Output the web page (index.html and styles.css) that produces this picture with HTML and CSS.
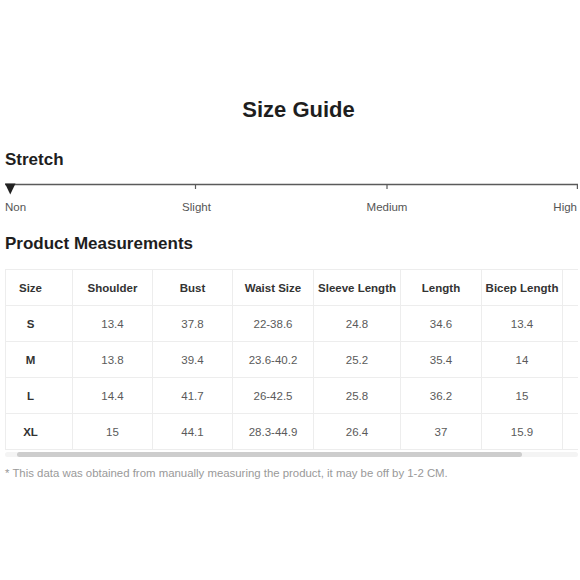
FILE: index.html
```html
<!DOCTYPE html>
<html>
<head>
<meta charset="utf-8">
<link rel="stylesheet" href="styles.css">
</head>
<body>
<div class="page">
  <h1 class="title">Size Guide</h1>
  <h2 class="section stretch-title">Stretch</h2>
  <svg class="slider" width="573" height="14" viewBox="0 0 573 14">
    <line x1="0" y1="1.5" x2="573" y2="1.5" stroke="#5a5a5a" stroke-width="1.6"/>
    <line x1="190.5" y1="1.5" x2="190.5" y2="6" stroke="#5a5a5a" stroke-width="1.2"/>
    <line x1="382" y1="1.5" x2="382" y2="6" stroke="#5a5a5a" stroke-width="1.2"/>
    <line x1="572.4" y1="1.5" x2="572.4" y2="6" stroke="#5a5a5a" stroke-width="1.2"/>
    <polygon points="0,0.5 10.5,0.5 5.25,11.5" fill="#222"/>
  </svg>
  <div class="labels">
    <span class="lbl l-non">Non</span>
    <span class="lbl l-slight">Slight</span>
    <span class="lbl l-medium">Medium</span>
    <span class="lbl l-high">High</span>
  </div>
  <h2 class="section pm-title">Product Measurements</h2>
  <div class="table-wrap">
    <table class="sizes">
      <colgroup>
        <col class="c-size"><col class="c-80"><col class="c-80"><col class="c-81"><col class="c-87"><col class="c-81"><col class="c-81"><col class="c-extra">
      </colgroup>
      <thead>
        <tr><th class="sz">Size</th><th>Shoulder</th><th>Bust</th><th>Waist Size</th><th>Sleeve Length</th><th>Length</th><th>Bicep Length</th><th></th></tr>
      </thead>
      <tbody>
        <tr><td class="sz">S</td><td>13.4</td><td>37.8</td><td>22-38.6</td><td>24.8</td><td>34.6</td><td>13.4</td><td></td></tr>
        <tr><td class="sz">M</td><td>13.8</td><td>39.4</td><td>23.6-40.2</td><td>25.2</td><td>35.4</td><td>14</td><td></td></tr>
        <tr><td class="sz">L</td><td>14.4</td><td>41.7</td><td>26-42.5</td><td>25.8</td><td>36.2</td><td>15</td><td></td></tr>
        <tr><td class="sz">XL</td><td>15</td><td>44.1</td><td>28.3-44.9</td><td>26.4</td><td>37</td><td>15.9</td><td></td></tr>
      </tbody>
    </table>
  </div>
  <div class="scrollbar"><div class="thumb"></div></div>
  <p class="note">* This data was obtained from manually measuring the product, it may be off by 1-2 CM.</p>
</div>
</body>
</html>
```
FILE: styles.css
```css
html, body {
  margin: 0;
  padding: 0;
  background: #fff;
}
body {
  font-family: "Liberation Sans", Arial, sans-serif;
  color: #222;
}
.page {
  padding: 97px 2px 0 5px;
  width: 573px;
}
.title {
  margin: 0;
  font-size: 22px;
  line-height: 26px;
  font-weight: bold;
  text-align: center;
  padding-left: 14px;
  color: #1e1e1e;
}
.section {
  margin: 0;
  font-size: 17px;
  line-height: 20px;
  font-weight: bold;
  color: #1e1e1e;
}
.stretch-title {
  margin-top: 27px;
}
.slider {
  display: block;
  margin-top: 13px;
}
.labels {
  display: grid;
  grid-template-columns: repeat(6, 1fr);
  margin-top: 4px;
  font-size: 11.5px;
  line-height: 13px;
  color: #555;
}
.l-non { grid-column: 1; text-align: left; }
.l-slight { grid-column: 2 / span 2; text-align: center; padding-left: 1px; }
.l-medium { grid-column: 4 / span 2; text-align: center; }
.l-high { grid-column: 6; text-align: right; padding-right: 1px; }
.pm-title {
  margin-top: 20px;
}
.table-wrap {
  margin-top: 15px;
  width: 573px;
  overflow: hidden;
}
.sizes {
  border-collapse: collapse;
  table-layout: fixed;
  width: 645px;
  font-size: 11.5px;
}
.c-size { width: 67px; }
.c-80 { width: 80px; }
.c-81 { width: 81px; }
.c-87 { width: 87px; }
.c-extra { width: 88px; }
.sizes th, .sizes td {
  border: 1px solid #ededed;
  height: 35px;
  padding: 0;
  text-align: center;
  vertical-align: middle;
  white-space: nowrap;
}
.sizes th {
  font-weight: bold;
  color: #333;
}
.sizes td {
  color: #5a5a5a;
}
.sizes .sz {
  font-weight: bold;
  color: #333;
  padding-right: 17px;
}
.scrollbar {
  margin-top: 2px;
  height: 5px;
  background: #f4f4f4;
  border-radius: 3px;
  padding-left: 12px;
}
.thumb {
  width: 505px;
  height: 5px;
  border-radius: 3px;
  background: #cdcdcd;
}
.note {
  margin: 10px 0 0 0;
  font-size: 11.4px;
  line-height: 13px;
  color: #999;
}
```
